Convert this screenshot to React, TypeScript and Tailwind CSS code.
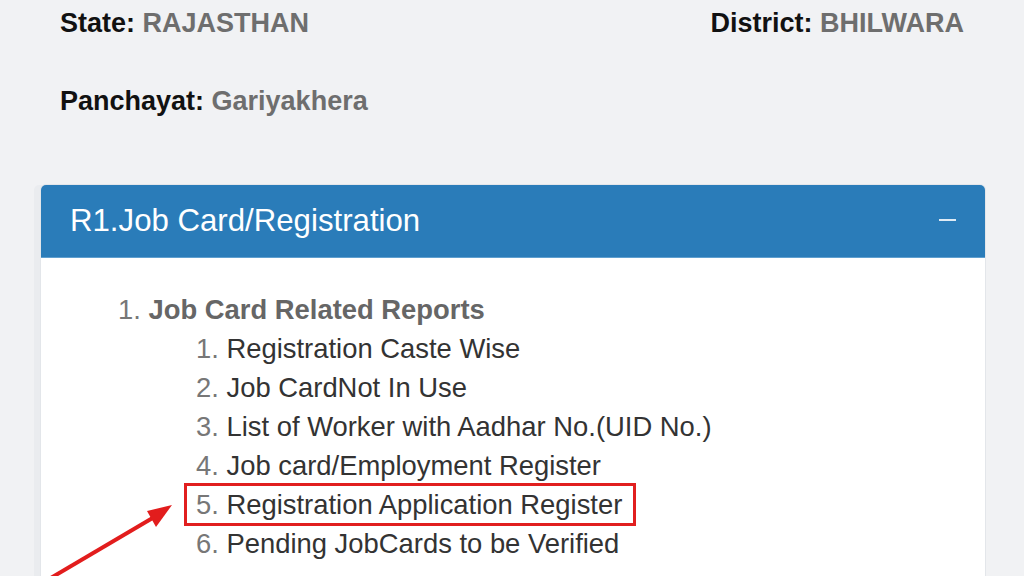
import React from 'react';

const reports = [
  'Registration Caste Wise',
  'Job CardNot In Use',
  'List of Worker with Aadhar No.(UID No.)',
  'Job card/Employment Register',
  'Registration Application Register',
  'Pending JobCards to be Verified',
];

function App() {
  return (
    <div
      className="relative h-[576px] w-[1024px] overflow-hidden bg-[#f1f2f4]"
      style={{ fontFamily: '"Liberation Sans", Arial, sans-serif' }}
    >
      {/* Location info */}
      <div className="px-[60px] pt-[4px] text-[27px] font-bold leading-[39px]">
        <div className="flex justify-between">
          <div>
            <span className="text-[#111]">State: </span>
            <span className="text-[#6e6e6e]">RAJASTHAN</span>
          </div>
          <div>
            <span className="text-[#111]">District: </span>
            <span className="text-[#6e6e6e]">BHILWARA</span>
          </div>
        </div>
        <div className="mt-[39px]">
          <span className="text-[#111]">Panchayat: </span>
          <span className="text-[#6e6e6e]">Gariyakhera</span>
        </div>
      </div>

      {/* Report card */}
      <div className="ml-[41px] mr-[39px] mt-[64px] rounded-t-[5px] shadow-[0_0_0_1px_#e3e6ea,-7px_0_0_0_#eaecef]">
        <div className="flex h-[73px] items-center justify-between rounded-t-[5px] border-b border-[#5f9fcf] bg-[#2a7cb9] pl-[29px] pr-[29px]">
          <h2 className="text-[31.2px] font-normal text-white">R1.Job Card/Registration</h2>
          <span className="mb-[3px] block h-[2px] w-[17px] bg-white/85" />
        </div>
        <div className="h-[400px] bg-white pl-[77px] pt-[32px] text-[27.4px] leading-[39px]">
          <div>
            <span className="text-[#777]">1. </span>
            <span className="font-bold text-[#666]">Job Card Related Reports</span>
          </div>
          <div className="pl-[78px]">
            {reports.map((r, i) => (
              <div key={r} className="relative">
                <span className="text-[#777]">{i + 1}. </span>
                <span className="text-[#333]">{r}</span>
                {i === 4 && (
                  <span className="absolute left-[-12px] top-[-2px] h-[43px] w-[452px] border-[3px] border-[#e11f1f]" />
                )}
              </div>
            ))}
          </div>
        </div>
      </div>

      {/* Annotation arrow */}
      <svg className="absolute left-0 top-0" width="1024" height="576" viewBox="0 0 1024 576">
        <line x1="44" y1="582" x2="156" y2="516" stroke="#e21d1d" strokeWidth="4" />
        <polygon points="172,505 147,511 156,527" fill="#e21d1d" />
      </svg>
    </div>
  );
}

export default App;
